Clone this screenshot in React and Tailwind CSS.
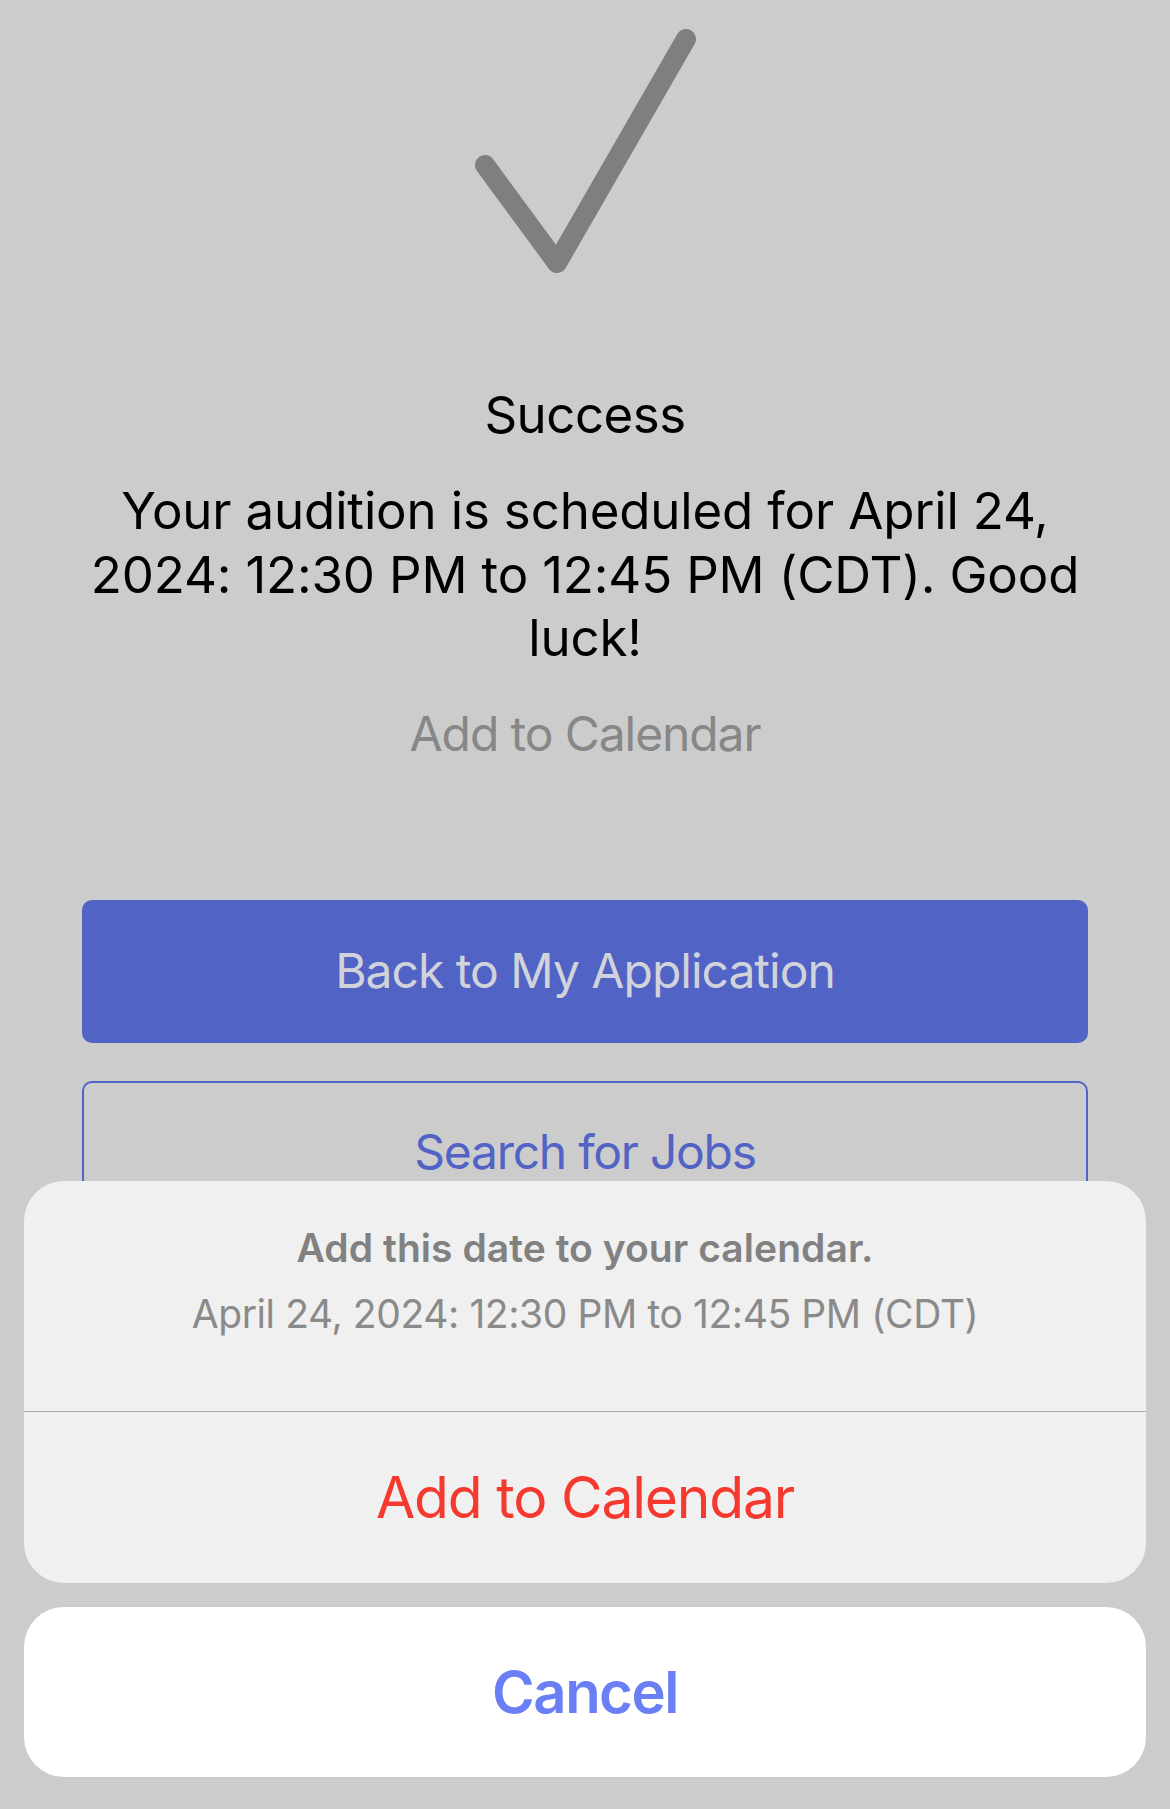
import React from "react";

const FONT = { fontFamily: "Inter, 'Liberation Sans', sans-serif" };

function Check() {
  return (
    <svg width="222" height="246" viewBox="0 0 222 246" fill="none" aria-hidden="true">
      <polyline
        points="11,137 83,235 212,11"
        stroke="#7f7f7f"
        strokeWidth="20"
        strokeLinecap="round"
        strokeLinejoin="round"
      />
    </svg>
  );
}

function ActionSheet() {
  return (
    <div className="absolute inset-x-0 bottom-[32px] px-[24px] flex flex-col gap-[24px]">
      <div className="rounded-[40px] bg-[#f0f0f0] overflow-hidden">
        <div className="h-[230px] flex flex-col items-center pt-[40px]">
          <p className="text-[39px] leading-[54px] font-semibold text-[#818181] tracking-[0.05px]">
            Add this date to your calendar.
          </p>
          <p className="mt-[12px] text-[39px] leading-[54px] text-[#8a8a8a] tracking-[-0.4px]">
            April 24, 2024: 12:30 PM to 12:45 PM (CDT)
          </p>
        </div>
        <div className="h-px bg-[#a9a9a9]" />
        <button className="w-full h-[171px] flex items-center justify-center text-[57px] text-[#f5392f] tracking-[-1.2px]">
          Add to Calendar
        </button>
      </div>
      <button className="h-[170px] rounded-[40px] bg-white flex items-center justify-center text-[58px] font-semibold text-[#6a7ff6] tracking-[-1.5px]">
        Cancel
      </button>
    </div>
  );
}

export default function App() {
  return (
    <div className="relative h-[1809px] w-full overflow-hidden bg-[#cccccc] text-black" style={FONT}>
      <main className="flex flex-col items-center">
        <div className="mt-[28px]">
          <Check />
        </div>

        <h1 className="mt-[111px] text-[51px] leading-[60px] tracking-[-0.5px]">Success</h1>

        <p className="mt-[34px] px-[60px] text-center text-[51px] leading-[63.5px] tracking-[-0.15px]">
          Your audition is scheduled for April 24,
          <br />
          2024: 12:30 PM to 12:45 PM (CDT). Good
          <br />
          luck!
        </p>

        <button className="mt-[36px] h-[56px] text-[48px] leading-[56px] text-[#878787] tracking-[-1.1px]">
          Add to Calendar
        </button>

        <div className="mt-[138px] w-full px-[82px] flex flex-col gap-[38px]">
          <button className="h-[143px] rounded-[10px] bg-[#5163c5] text-[48px] text-[#d2d3da] tracking-[-1px]">
            Back to My Application
          </button>
          <button className="h-[143px] rounded-[10px] border-[2.5px] border-[#5163c5] text-[48px] text-[#5163c5] tracking-[-1.25px]">
            Search for Jobs
          </button>
        </div>
      </main>

      <ActionSheet />
    </div>
  );
}
